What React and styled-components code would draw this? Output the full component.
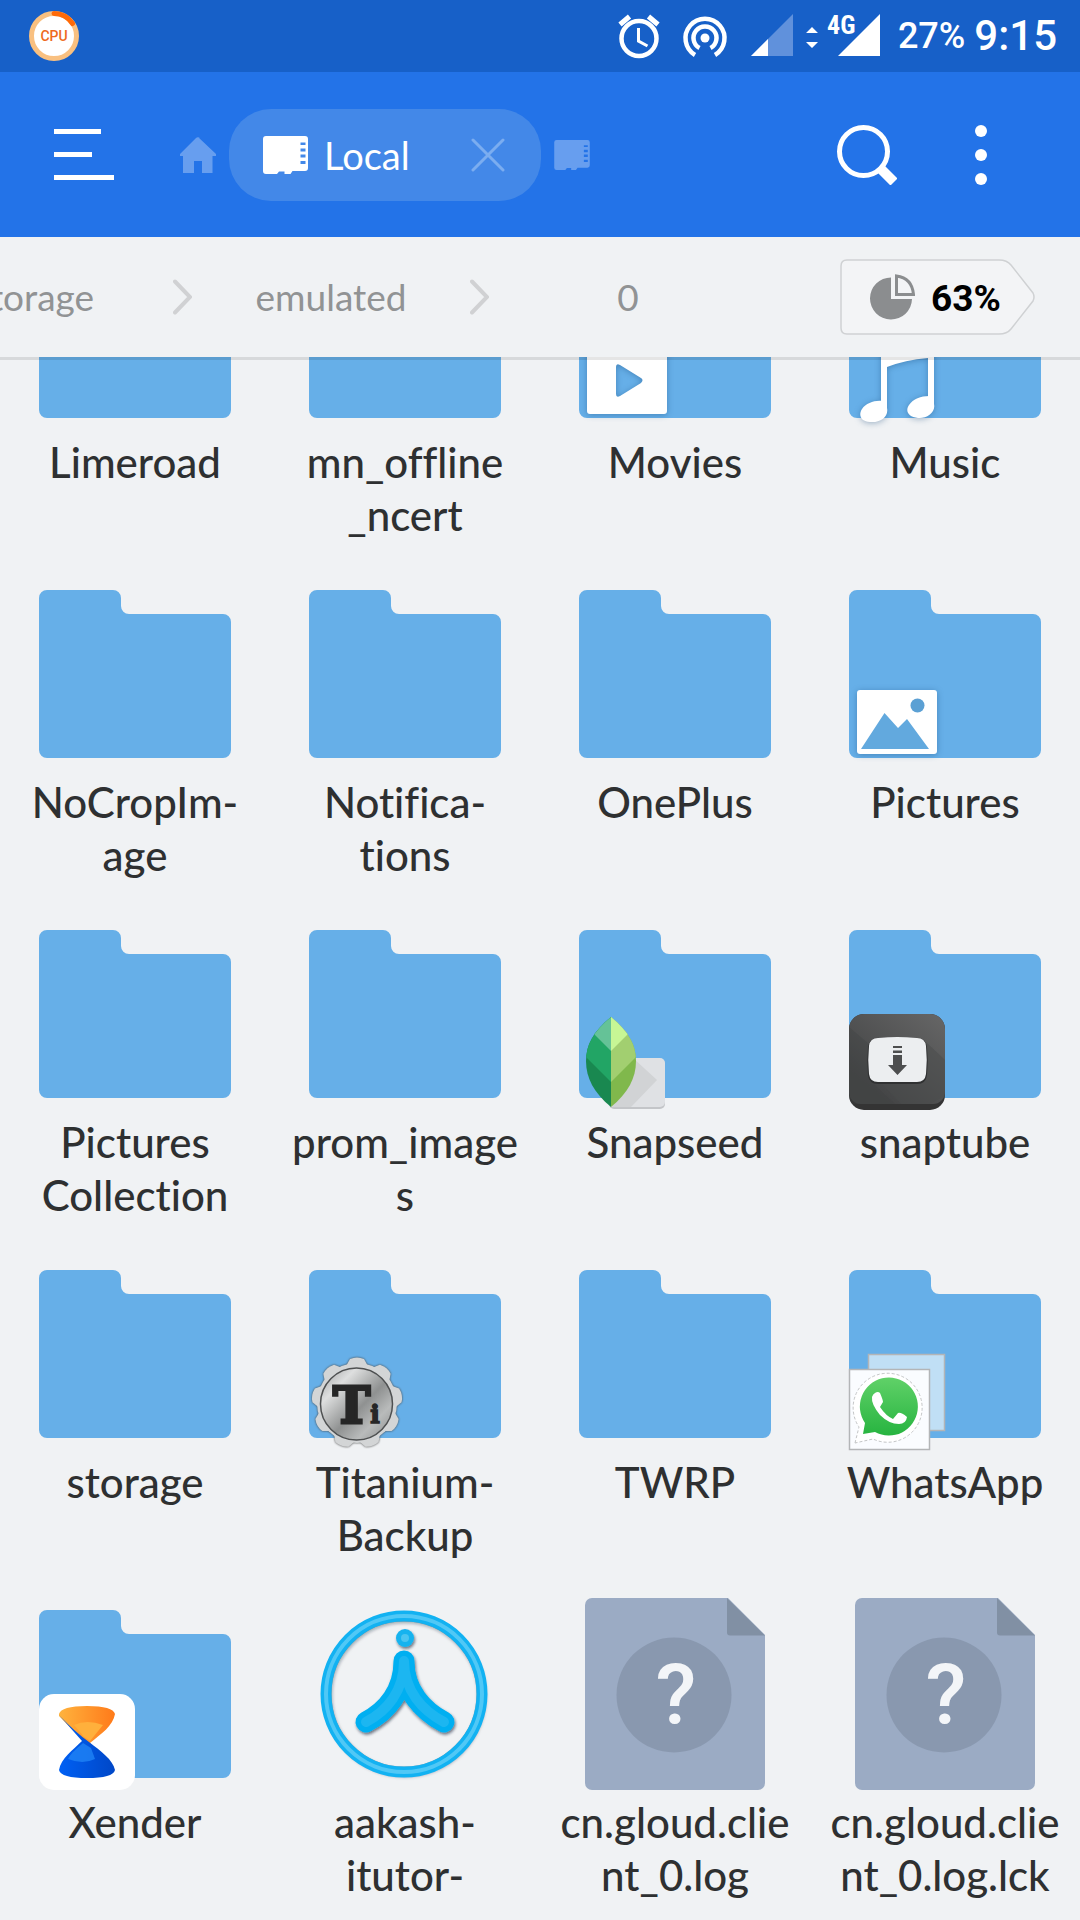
import React from "react";
import styled, { createGlobalStyle } from "styled-components";

const GlobalStyle = createGlobalStyle`
  *, *::before, *::after { box-sizing: border-box; }
  body {
    margin: 0;
    background: #f0f2f4;
    color: #2e3031;
    font-family: Lato, "Open Sans", sans-serif;
    font-variant-ligatures: none;
  }
  button { font: inherit; font-variant-ligatures: none; color: inherit; background: none; border: 0; padding: 0; cursor: pointer; }
  a { color: inherit; text-decoration: none; }
  svg { display: block; flex: none; }
`;

const Screen = styled.div`
  display: flex;
  flex-direction: column;
  height: 100vh;
  overflow: hidden;
`;

const StatusBar = styled.div`
  flex: none;
  display: flex;
  align-items: center;
  justify-content: space-between;
  height: 72px;
  padding: 0 23px 0 29px;
  background: #1760c8;
  color: #fff;
  font-family: Roboto, sans-serif;
`;

const StatusIcons = styled.div`
  display: flex;
  align-items: center;
`;

const StatusIcon = styled.svg`
  width: ${(p) => p.$width}px;
  height: 44px;
  margin-right: ${(p) => p.$gap}px;
  overflow: visible;
`;

const Battery = styled.span`
  font-size: 36px;
  font-weight: 500;
  line-height: 48px;
  margin-right: 9px;
`;

const Clock = styled.time`
  font-size: 42px;
  font-weight: 500;
  line-height: 48px;
`;

const Toolbar = styled.header`
  flex: none;
  display: flex;
  align-items: center;
  height: 165px;
  padding: 0 93px 0 54px;
  background: #2373e8;
  color: #fff;
`;

const IconButton = styled.button`
  flex: none;
  margin-left: ${(p) => p.$before || 0}px;
  opacity: ${(p) => (p.$dim ? 0.31 : 1)};
`;

const Tab = styled.div`
  display: flex;
  align-items: center;
  width: 312px;
  height: 92px;
  margin: 0 13px;
  padding: 0 36px 0 34px;
  border-radius: 42px;
  background: #4388e8;
  font-size: 38px;
  line-height: 52px;
`;

const TabName = styled.span`
  flex: 1;
  margin-left: 16px;
`;

const Spacer = styled.div`
  flex: 1;
`;

const PathBar = styled.nav`
  flex: none;
  position: relative;
  z-index: 1;
  display: flex;
  align-items: center;
  height: 120px;
  padding-right: 45px;
  background: #f0f2f4;
  box-shadow: 0 3px 0 rgba(0, 0, 0, 0.1);
`;

const Crumbs = styled.div`
  flex: 1;
  min-width: 0;
  display: flex;
  justify-content: flex-end;
  overflow: hidden;
  padding-right: 73px;
`;

const Crumb = styled.a`
  flex: none;
  display: flex;
  align-items: center;
  color: #919394;
  font-size: 37px;
  line-height: 48px;
`;

const CrumbName = styled.span`
  width: 278px;
  text-align: center;
`;

const UsageTag = styled.button`
  flex: none;
  display: grid;
  align-items: center;
  width: 195px;
  height: 76px;

  > * { grid-area: 1 / 1; }
`;

const UsageContent = styled.span`
  display: flex;
  align-items: center;
  gap: 16px;
  padding-left: 30px;
  color: #000;
  font: 700 37px/48px Roboto, sans-serif;
`;

const UsageValue = styled.span`
  padding-top: 4px;
`;

const Files = styled.main`
  flex: 1;
  min-height: 0;
  overflow: hidden;
`;

/* The list is scrolled part of the way through its first row. */
const Grid = styled.div`
  display: grid;
  grid-template-columns: repeat(4, minmax(0, 1fr));
  grid-auto-rows: 340px;
  margin-top: -119px;
`;

const Entry = styled.button`
  display: flex;
  flex-direction: column;
  align-items: center;
  justify-content: flex-start;
`;

const IconBox = styled.span`
  position: relative;
  width: 192px;
  height: 192px;
`;

const Badge = styled.svg`
  position: absolute;
  left: 0;
  bottom: 0;
  width: 96px;
  height: 96px;
  overflow: visible;
`;

const Label = styled.span`
  display: flex;
  flex-direction: column;
  align-items: center;
  margin-top: 6px;
  font-size: 42px;
  font-weight: 500;
  line-height: 53px;
  white-space: nowrap;
`;

function SdCard({ width, height }) {
  return (
    <svg width={width} height={height} viewBox="0 0 45 38" fill="currentColor" aria-hidden="true">
      <path
        fillRule="evenodd"
        d="M3 0H42a3 3 0 0 1 3 3V32a3 3 0 0 1-3 3H29.500L27.500 38H21.500V35.500H16L14 38H3a3 3 0 0 1-3-3V3a3 3 0 0 1 3-3zM37.500 6.500v2.500h5v-2.500zM37.500 12.500v3h5v-3zM37.500 18.500v3h5v-3zM37.500 25v3h5v-3z"
      />
    </svg>
  );
}

function Chevron() {
  return (
    <svg width="19" height="36" viewBox="0 0 19 36" fill="none" stroke="#d0d1d3" strokeWidth="4" strokeLinecap="round" aria-hidden="true">
      <path d="M2 2.500L17 18L2 33.500" />
    </svg>
  );
}

function Folder() {
  return (
    <svg width="192" height="192" viewBox="0 0 192 192" aria-hidden="true">
      <path
        fill="#66afe8"
        d="M8 12H74a8 8 0 0 1 8 8V28a8 8 0 0 0 8 8H184a8 8 0 0 1 8 8V172a8 8 0 0 1-8 8H8a8 8 0 0 1-8-8V20a8 8 0 0 1 8-8z"
      />
    </svg>
  );
}

function UnknownFile() {
  return (
    <svg width="192" height="192" viewBox="0 0 192 192" aria-hidden="true">
      <path fill="#9babc4" d="M13 0H149L186 37V185a7 7 0 0 1-7 7H13a7 7 0 0 1-7-7V7a7 7 0 0 1 7-7z" />
      <path fill="#8190a4" d="M148 0L186 37.500H151a3 3 0 0 1-3-3z" />
      <circle cx="95" cy="97" r="57.500" fill="#8998af" />
      <text x="97" y="126" textAnchor="middle" fontFamily="Roboto, sans-serif" fontWeight="500" fontSize="84" fill="#f3f5f8">?</text>
    </svg>
  );
}

function Aakash() {
  const figure = "M95 63C95 93 78 113 57 124M95 63C95 93 114 113 135 124";
  return (
    <svg width="192" height="192" viewBox="0 0 192 192" fill="none" strokeLinecap="round" aria-hidden="true">
      <defs>
        <filter id="soft" x="-20%" y="-20%" width="140%" height="140%">
          <feDropShadow dx="1" dy="2" stdDeviation="1.5" floodColor="#123" floodOpacity="0.6" />
        </filter>
      </defs>
      <g filter="url(#soft)">
        <circle cx="95" cy="96" r="77" stroke="#555c60" strokeOpacity="0.5" strokeWidth="9" />
        <path d={figure} stroke="#05aff1" strokeWidth="21" />
        <circle cx="96" cy="40" r="9" fill="#18b3ef" />
      </g>
      <circle cx="95" cy="96" r="78" stroke="#12b2f2" strokeWidth="11" />
      <circle cx="95" cy="96" r="78" stroke="#50c8f6" strokeWidth="4" />
      <path d={figure} stroke="#1cb6f1" strokeWidth="10" />
      <circle cx="96" cy="40" r="4" fill="#4bc5f1" />
    </svg>
  );
}

const shade = { filter: "drop-shadow(0 1px 3px rgba(20,70,120,.4))" };

function MoviesBadge() {
  return (
    <Badge viewBox="0 0 96 96" aria-hidden="true">
      <path fill="#fff" fillRule="evenodd" style={shade} d="M11 8H85a3 3 0 0 1 3 3V77a3 3 0 0 1-3 3H11a3 3 0 0 1-3-3V11a3 3 0 0 1 3-3zM37 33V60Q37 64 41 62L62 49Q65 46 62 44L41 31Q37 29 37 33z" />
    </Badge>
  );
}

function MusicBadge() {
  return (
    <Badge viewBox="0 0 96 96" aria-hidden="true">
      <g fill="#fff" style={shade}>
        <path d="M32 12L85 2V74H79V24Q56 26 38 33V78H32z" />
        <path d="M38 74C40 83 31 89 21 88C12 88 9 81 13 75C17 69 26 66 33 67z" />
        <path d="M85 70C87 79 77 85 69 84C59 83 56 77 60 71C64 65 72 62 80 62z" />
      </g>
    </Badge>
  );
}

function PicturesBadge() {
  return (
    <Badge viewBox="0 0 96 96" aria-hidden="true">
      <rect x="8" y="16" width="80" height="64" rx="3" fill="#fff" style={shade} />
      <path d="M12 75L35.500 39L49 54L58 45L80 75z" fill="#62a9de" />
      <circle cx="68.500" cy="31.500" r="7" fill="#5ba0d4" />
    </Badge>
  );
}

function SnapseedBadge() {
  return (
    <Badge viewBox="0 0 96 96" aria-hidden="true">
      <defs>
        <clipPath id="leaf"><path d="M32 3C50 18 57 31 57 47C57 64 49 79 32 93C15 79 7 64 7 47C7 31 14 18 32 3z" /></clipPath>
      </defs>
      <rect x="30" y="45" width="56" height="50" rx="5" fill="#c3c5c8" />
      <rect x="30" y="44" width="56" height="49" rx="5" fill="#dfe1e4" />
      <path d="M54 44L78 66L52 93H32z" fill="#d1d3d5" />
      <g clipPath="url(#leaf)">
        <path d="M0 0H32V96H0z" fill="#198850" />
        <path d="M0 0H32V68L7 43L0 36z" fill="#22a565" />
        <path d="M0 0H32V37L15 20L0 5z" fill="#65c297" />
        <path d="M32 0H64V96H32z" fill="#80b84c" />
        <path d="M32 0H64V36L32 68z" fill="#a2cf70" />
        <path d="M32 0H64V5L32 37z" fill="#c7f695" />
      </g>
    </Badge>
  );
}

function SnaptubeBadge() {
  return (
    <Badge viewBox="0 0 96 96" aria-hidden="true">
      <defs>
        <linearGradient id="tube" x1="1" y1="0" x2="0.300" y2="0.900">
          <stop offset="0" stopColor="#696969" />
          <stop offset="1" stopColor="#444546" />
        </linearGradient>
        <clipPath id="tubeBox"><rect width="96" height="96" rx="15" /></clipPath>
      </defs>
      <g clipPath="url(#tubeBox)">
        <rect width="96" height="96" fill="#343434" />
        <rect y="-10" width="96" height="100" rx="12" fill="url(#tube)" />
        <path d="M0 13L20 30V66L46 90H0z" fill="#404142" opacity=".35" />
        <path d="M77 28L96 46V82L80 90H52L32 69H70z" fill="#4a4b4b" opacity=".5" />
      </g>
      <path d="M29 23Q48 21 68 23Q77 23 78 32Q79.500 46 78 60Q77 69 68 69H29Q20 69 19 60Q17.500 46 19 32Q20 23 29 23z" fill="#303132" transform="translate(0 1)" />
      <path d="M29 24Q48 22 68 24Q76 24 77 32Q78.500 46 77 60Q76 68 68 68H29Q21 68 20 60Q18.500 46 20 32Q21 24 29 24z" fill="#eceef0" />
      <path d="M44 32h9v2h-9zM44 36.500h9v2.500h-9zM44 41h9v10h5L48.500 61L39 51h5z" fill="#4d4e4f" />
    </Badge>
  );
}

function TitaniumBadge() {
  const teeth = Array.from({ length: 9 }, (_, i) => i * 40);
  return (
    <Badge viewBox="0 0 96 96" aria-hidden="true">
      <defs>
        <linearGradient id="metal" x1="0" y1="0" x2="1" y2="1">
          <stop offset="0" stopColor="#9b9d9e" />
          <stop offset="0.250" stopColor="#dedfdf" />
          <stop offset="0.550" stopColor="#8f9191" />
          <stop offset="0.750" stopColor="#b9bbbb" />
          <stop offset="1" stopColor="#898b8b" />
        </linearGradient>
      </defs>
      <g fill="#d3d5d6" style={{ filter: "drop-shadow(0 0 1px #444)" }}>
        {teeth.map((a) => (
          <path key={a} d="M36 14L41 5Q48 2 55 5L60 14z" transform={`rotate(${a} 48 49)`} />
        ))}
        <circle cx="48" cy="49" r="40" />
      </g>
      <circle cx="47.500" cy="50" r="36" fill="url(#metal)" stroke="#4e5051" strokeWidth="1.500" />
      <text x="24" y="69" fontFamily="'DejaVu Serif', serif" fontWeight="700" fontSize="50" fill="#262626" stroke="#262626" strokeWidth="3">
        T<tspan fontSize="25" strokeWidth="1.500">i</tspan>
      </text>
    </Badge>
  );
}

function WhatsAppBadge() {
  return (
    <Badge viewBox="0 0 96 96" aria-hidden="true">
      <defs>
        <linearGradient id="green" x1="0" y1="0" x2="0" y2="1">
          <stop offset="0" stopColor="#60d168" />
          <stop offset="1" stopColor="#27b440" />
        </linearGradient>
      </defs>
      <rect x="19.500" y="0.500" width="76" height="76" fill="#c0dff5" stroke="#b3b5b7" strokeWidth="1.500" />
      <rect x="0.500" y="15.500" width="80" height="80" fill="#fafcff" stroke="#b3b5b7" strokeWidth="1.500" />
      <path d="M6 89L10 73A34.500 34.500 0 1 1 24 85z" fill="#fff" stroke="#c3c5c6" strokeDasharray="3 2" />
      <path d="M14 80L16 69A29 29 0 1 1 26 78z" fill="url(#green)" />
      <path d="M26 39Q29 37 31 39Q34 46 34 48L31 53Q37 62 44 65L49 59Q52 58 58 63Q57 70 50 70Q40 70 31 61Q22 50 23 43Q24 40 26 39z" fill="#fff" />
    </Badge>
  );
}

function XenderBadge() {
  return (
    <Badge viewBox="0 0 96 96" aria-hidden="true">
      <defs>
        <linearGradient id="sand"><stop offset="0" stopColor="#ffb33d" /><stop offset="1" stopColor="#ff7a1a" /></linearGradient>
        <linearGradient id="sea"><stop offset="0" stopColor="#0060f4" /><stop offset="1" stopColor="#0047c7" /></linearGradient>
      </defs>
      <rect width="96" height="96" rx="15" fill="#fff" />
      <path d="M20 20Q22 12 48 12Q74 12 76 20C74 32 62 40 51 49L70 67Q46 50 20 22z" fill="url(#sand)" />
      <path d="M35 31Q48 25 64 31L51 47L45 43z" fill="#ffb03c" />
      <path d="M20 21L43 47C34 56 22 64 20 76Q22 84 48 84Q74 84 76 76C74 66 62 57 50 48Q36 38 20 21z" fill="url(#sea)" />
      <path d="M44 49C38 54 32 59 29 65Q44 71 56 65L52 54z" fill="#1f83f5" opacity=".8" />
    </Badge>
  );
}

const entries = [
  { lines: ["Limeroad"] },
  { lines: ["mn_offline", "_ncert"] },
  { lines: ["Movies"], badge: MoviesBadge },
  { lines: ["Music"], badge: MusicBadge },
  { lines: ["NoCropIm-", "age"] },
  { lines: ["Notifica-", "tions"] },
  { lines: ["OnePlus"] },
  { lines: ["Pictures"], badge: PicturesBadge },
  { lines: ["Pictures", "Collection"] },
  { lines: ["prom_image", "s"] },
  { lines: ["Snapseed"], badge: SnapseedBadge },
  { lines: ["snaptube"], badge: SnaptubeBadge },
  { lines: ["storage"] },
  { lines: ["Titanium-", "Backup"], badge: TitaniumBadge },
  { lines: ["TWRP"] },
  { lines: ["WhatsApp"], badge: WhatsAppBadge },
  { lines: ["Xender"], badge: XenderBadge },
  { lines: ["aakash-", "itutor-"], icon: Aakash },
  { lines: ["cn.gloud.clie", "nt_0.log"], icon: UnknownFile },
  { lines: ["cn.gloud.clie", "nt_0.log.lck"], icon: UnknownFile },
];

function FileEntry({ lines, icon: Icon = Folder, badge: Mark }) {
  return (
    <Entry type="button">
      <IconBox>
        <Icon />
        {Mark && <Mark />}
      </IconBox>
      <Label>
        {lines.map((line) => (
          <span key={line}>{line}</span>
        ))}
      </Label>
    </Entry>
  );
}

export default function App() {
  return (
    <Screen>
      <GlobalStyle />
      <StatusBar>
        <svg width="50" height="50" viewBox="0 0 50 50" role="img" aria-label="CPU">
          <circle cx="25" cy="25" r="22.500" fill="#fff" stroke="#f9c080" strokeWidth="5" />
          <path d="M25 2.500A22.500 22.500 0 0 1 43.500 12.500" fill="none" stroke="#ff6a08" strokeWidth="5" strokeLinecap="round" />
          <text x="25" y="30" textAnchor="middle" fontFamily="Roboto, sans-serif" fontWeight="500" fontSize="14" fill="#ee6a1c">CPU</text>
        </svg>
        <StatusIcons>
          <StatusIcon $width={42} $gap={23} viewBox="0 0 42 44" fill="none" stroke="#fff" aria-hidden="true">
            <circle cx="21" cy="24.500" r="17.500" strokeWidth="4.500" />
            <path d="M20.500 14V27L29.500 32" strokeWidth="3" />
            <path d="M2 10.500L11.500 2.500M40 10.500L30.500 2.500" strokeWidth="5" />
          </StatusIcon>
          <StatusIcon $width={44} $gap={24} viewBox="0 0 44 44" fill="none" stroke="#fff" strokeWidth="4.500" aria-hidden="true">
            <circle cx="22" cy="24" r="4.500" fill="#fff" stroke="none" />
            <path d="M16.500 34A11.500 11.500 0 1 1 27.500 34" />
            <path d="M12 41A19.500 19.500 0 1 1 32 41" />
          </StatusIcon>
          <StatusIcon $width={42} $gap={13} viewBox="0 0 42 44" aria-hidden="true">
            <path d="M0 42L42 0V42z" fill="#6091dc" />
            <path d="M0 42L17 25V42z" fill="#fff" />
          </StatusIcon>
          <StatusIcon $width={12} $gap={9} viewBox="0 0 12 44" fill="#fff" aria-hidden="true">
            <path d="M0 19L6 13L12 19zM0 28L6 34L12 28z" />
          </StatusIcon>
          <StatusIcon $width={53} $gap={18} viewBox="0 0 53 44" fill="#fff" aria-hidden="true">
            <path d="M11 42L53 0V42z" />
            <text x="0" y="20" fontFamily="'Roboto Condensed', Roboto, sans-serif" fontWeight="700" fontSize="26">4G</text>
          </StatusIcon>
          <Battery>27%</Battery>
          <Clock>9:15</Clock>
        </StatusIcons>
      </StatusBar>

      <Toolbar>
        <IconButton type="button" aria-label="Menu">
          <svg width="60" height="52" viewBox="0 0 60 52" fill="#fff">
            <path d="M0 0h47v5H0zM0 23h38v5H0zM0 46h60v5H0z" />
          </svg>
        </IconButton>
        <IconButton type="button" aria-label="Home" $before={66} $dim>
          <svg width="36" height="36" viewBox="0 0 36 36" fill="#fff">
            <path d="M18 0L36 17V19H32.500V36H22V24H14V36H3V19H0V17L15.500 1.500Q18-1 20.500 1.500z" />
          </svg>
        </IconButton>
        <Tab>
          <SdCard width={45} height={38} />
          <TabName>Local</TabName>
          <IconButton type="button" aria-label="Close tab">
            <svg width="34" height="34" viewBox="0 0 34 34" fill="none" stroke="#7badf0" strokeWidth="3" strokeLinecap="round">
              <path d="M2 2L32 32M32 2L2 32" />
            </svg>
          </IconButton>
        </Tab>
        <IconButton type="button" aria-label="Next tab" $dim>
          <SdCard width={36} height={30} />
        </IconButton>
        <Spacer />
        <IconButton type="button" aria-label="Search">
          <svg width="60" height="60" viewBox="0 0 60 60" fill="none" stroke="#fff">
            <circle cx="26.500" cy="26.500" r="24" strokeWidth="5" />
            <path d="M43 43L57 57" strokeWidth="10" />
          </svg>
        </IconButton>
        <IconButton type="button" aria-label="More options" $before={78}>
          <svg width="12" height="60" viewBox="0 0 12 60" fill="#fff">
            <circle cx="6" cy="6" r="6" />
            <circle cx="6" cy="30" r="6" />
            <circle cx="6" cy="54" r="6" />
          </svg>
        </IconButton>
      </Toolbar>

      <PathBar aria-label="Path">
        <Crumbs>
          <Crumb href="#storage"><CrumbName>storage</CrumbName><Chevron /></Crumb>
          <Crumb href="#emulated"><CrumbName>emulated</CrumbName><Chevron /></Crumb>
          <Crumb href="#0"><CrumbName>0</CrumbName></Crumb>
        </Crumbs>
        <UsageTag type="button">
          <svg width="195" height="76" viewBox="0 0 195 76" aria-hidden="true">
            <path d="M7 1H159Q167 1 171 6L193 34Q195 38 193 42L171 70Q167 75 159 75H7Q1 75 1 69V7Q1 1 7 1z" fill="#f3f4f6" stroke="#cfd1d3" strokeWidth="1.500" />
          </svg>
          <UsageContent>
            <svg width="45" height="46" viewBox="0 0 45 46" aria-hidden="true">
              <path d="M21 3.500V25H42A21 21 0 1 1 21 3.500z" fill="#8b8d8f" />
              <path d="M26.500 2Q42 4 43.500 20.500H26.500z" fill="none" stroke="#8b8d8f" strokeWidth="3" />
            </svg>
            <UsageValue>63%</UsageValue>
          </UsageContent>
        </UsageTag>
      </PathBar>

      <Files>
        <Grid>
          {entries.map((entry, i) => (
            <FileEntry key={i} {...entry} />
          ))}
        </Grid>
      </Files>
    </Screen>
  );
}
